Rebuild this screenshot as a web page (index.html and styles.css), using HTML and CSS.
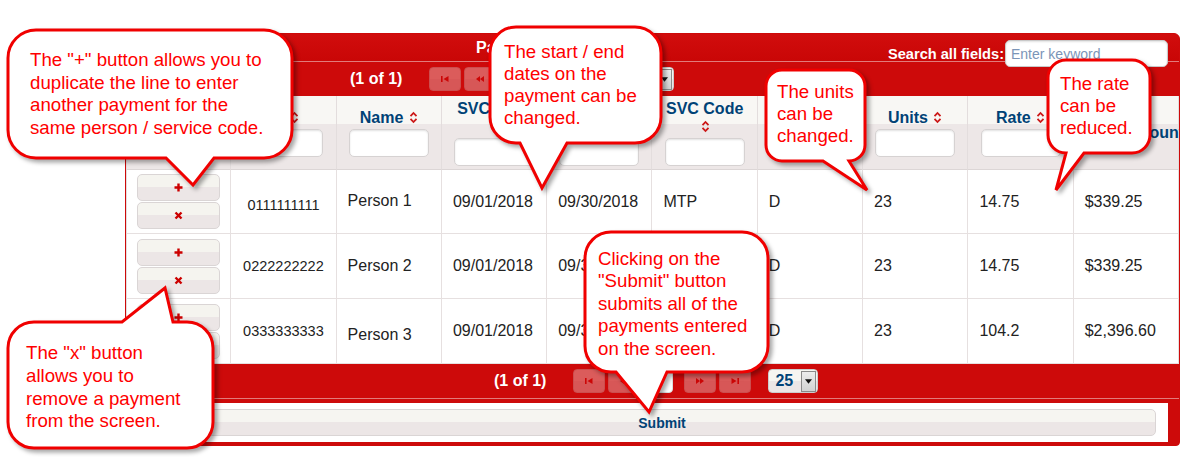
FILE: index.html
```html
<!DOCTYPE html>
<html lang="en">
<head>
<meta charset="utf-8">
<title>Payments</title>
<link rel="stylesheet" href="styles.css">
</head>
<body>
<div class="page">
  <div class="panel">
    <div class="titlebar">
      <span class="title">Payments</span>
      <div class="search">
        <label class="search-lbl" for="kw">Search all fields:</label>
        <input id="kw" class="search-in" type="text" placeholder="Enter keyword">
      </div>
    </div>

    <div class="pager pager-top">
      <span class="report">(1 of 1)</span>
      <span class="pbtn off"><svg class="picon" viewBox="0 0 10 8"><rect x="1" y="1" width="1.6" height="6"/><polygon points="8.5,1 3.5,4 8.5,7"/></svg></span>
      <span class="pbtn off"><svg class="picon" viewBox="0 0 10 8"><polygon points="5,1 1,4 5,7"/><polygon points="9,1 5,4 9,7"/></svg></span>
      <span class="pnum">1</span>
      <span class="pbtn off"><svg class="picon" viewBox="0 0 10 8"><polygon points="1,1 5,4 1,7"/><polygon points="5,1 9,4 5,7"/></svg></span>
      <span class="pbtn off"><svg class="picon" viewBox="0 0 10 8"><polygon points="1.5,1 6.5,4 1.5,7"/><rect x="7.4" y="1" width="1.6" height="6"/></svg></span>
      <span class="rpp"><span class="rpp-val">25</span><span class="rpp-trig"><svg class="tri" viewBox="0 0 8 5"><polygon points="0,0 8,0 4,5"/></svg></span></span>
    </div>

    <table class="grid">
      <colgroup>
        <col><col><col><col><col><col><col><col><col><col>
      </colgroup>
      <thead>
        <tr>
          <th></th>
          <th><div class="hc"><span class="lbl">ID <svg class="sort" viewBox="0 0 9 13"><path d="M1.5 5.2 L4.5 2 L7.5 5.2 M1.5 7.8 L4.5 11 L7.5 7.8"/></svg></span><input class="filter" type="text"></div></th>
          <th><div class="hc"><span class="lbl">Name <svg class="sort" viewBox="0 0 9 13"><path d="M1.5 5.2 L4.5 2 L7.5 5.2 M1.5 7.8 L4.5 11 L7.5 7.8"/></svg></span><input class="filter" type="text"></div></th>
          <th><div class="hc"><span class="lbl">SVC Start <svg class="sort" viewBox="0 0 9 13"><path d="M1.5 5.2 L4.5 2 L7.5 5.2 M1.5 7.8 L4.5 11 L7.5 7.8"/></svg></span><input class="filter" type="text"></div></th>
          <th><div class="hc"><span class="lbl">SVC End Date <svg class="sort" viewBox="0 0 9 13"><path d="M1.5 5.2 L4.5 2 L7.5 5.2 M1.5 7.8 L4.5 11 L7.5 7.8"/></svg></span><input class="filter" type="text"></div></th>
          <th><div class="hc"><span class="lbl">SVC Code <svg class="sort" viewBox="0 0 9 13"><path d="M1.5 5.2 L4.5 2 L7.5 5.2 M1.5 7.8 L4.5 11 L7.5 7.8"/></svg></span><input class="filter" type="text"></div></th>
          <th><div class="hc"><span class="lbl">Mod <svg class="sort" viewBox="0 0 9 13"><path d="M1.5 5.2 L4.5 2 L7.5 5.2 M1.5 7.8 L4.5 11 L7.5 7.8"/></svg></span><input class="filter" type="text"></div></th>
          <th><div class="hc"><span class="lbl">Units <svg class="sort" viewBox="0 0 9 13"><path d="M1.5 5.2 L4.5 2 L7.5 5.2 M1.5 7.8 L4.5 11 L7.5 7.8"/></svg></span><input class="filter" type="text"></div></th>
          <th><div class="hc"><span class="lbl">Rate <svg class="sort" viewBox="0 0 9 13"><path d="M1.5 5.2 L4.5 2 L7.5 5.2 M1.5 7.8 L4.5 11 L7.5 7.8"/></svg></span><input class="filter" type="text"></div></th>
          <th><div class="hc-wide"><span class="lbl-nowrap">Payment Amount <svg class="sort" viewBox="0 0 9 13"><path d="M1.5 5.2 L4.5 2 L7.5 5.2 M1.5 7.8 L4.5 11 L7.5 7.8"/></svg></span></div></th>
        </tr>
      </thead>
      <tbody>
        <tr class="r1">
          <td><div class="rowbtns"><button class="rbtn"><svg class="ricon" viewBox="0 0 9 9"><path d="M4.5 0.5 V8.5 M0.5 4.5 H8.5"/></svg></button><button class="rbtn"><svg class="ricon" viewBox="0 0 9 9"><path d="M1.5 1.5 L7.5 7.5 M7.5 1.5 L1.5 7.5"/></svg></button></div></td>
          <td class="id down">0111111111</td>
          <td class="up">Person 1</td>
          <td>09/01/2018</td>
          <td>09/30/2018</td>
          <td>MTP</td>
          <td>D</td>
          <td>23</td>
          <td>14.75</td>
          <td>$339.25</td>
        </tr>
        <tr class="r2">
          <td><div class="rowbtns"><button class="rbtn"><svg class="ricon" viewBox="0 0 9 9"><path d="M4.5 0.5 V8.5 M0.5 4.5 H8.5"/></svg></button><button class="rbtn"><svg class="ricon" viewBox="0 0 9 9"><path d="M1.5 1.5 L7.5 7.5 M7.5 1.5 L1.5 7.5"/></svg></button></div></td>
          <td class="id">0222222222</td>
          <td>Person 2</td>
          <td>09/01/2018</td>
          <td>09/30/2018</td>
          <td>MTP</td>
          <td>D</td>
          <td>23</td>
          <td>14.75</td>
          <td>$339.25</td>
        </tr>
        <tr class="r3">
          <td><div class="rowbtns"><button class="rbtn"><svg class="ricon" viewBox="0 0 9 9"><path d="M4.5 0.5 V8.5 M0.5 4.5 H8.5"/></svg></button><button class="rbtn"><svg class="ricon" viewBox="0 0 9 9"><path d="M1.5 1.5 L7.5 7.5 M7.5 1.5 L1.5 7.5"/></svg></button></div></td>
          <td class="id">0333333333</td>
          <td class="down">Person 3</td>
          <td>09/01/2018</td>
          <td>09/30/2018</td>
          <td>MTP</td>
          <td>D</td>
          <td>23</td>
          <td>104.2</td>
          <td>$2,396.60</td>
        </tr>
      </tbody>
    </table>

    <div class="pager pager-bottom">
      <span class="report">(1 of 1)</span>
      <span class="pbtn off"><svg class="picon" viewBox="0 0 10 8"><rect x="1" y="1" width="1.6" height="6"/><polygon points="8.5,1 3.5,4 8.5,7"/></svg></span>
      <span class="pbtn off"><svg class="picon" viewBox="0 0 10 8"><polygon points="5,1 1,4 5,7"/><polygon points="9,1 5,4 9,7"/></svg></span>
      <span class="pnum">1</span>
      <span class="pbtn off"><svg class="picon" viewBox="0 0 10 8"><polygon points="1,1 5,4 1,7"/><polygon points="5,1 9,4 5,7"/></svg></span>
      <span class="pbtn off"><svg class="picon" viewBox="0 0 10 8"><polygon points="1.5,1 6.5,4 1.5,7"/><rect x="7.4" y="1" width="1.6" height="6"/></svg></span>
      <span class="rpp"><span class="rpp-val">25</span><span class="rpp-trig"><svg class="tri" viewBox="0 0 8 5"><polygon points="0,0 8,0 4,5"/></svg></span></span>
    </div>

    <div class="footer">
      <div class="fbox"><button class="submit">Submit</button></div>
    </div>
  </div>

  <svg class="callouts" viewBox="0 0 1185 457" width="1185" height="457">
    <path d="M36,30 H264 A28,28 0 0 1 292,58 V130 A28,28 0 0 1 264,158 H214 L193,185 L166,158 H36 A28,28 0 0 1 8,130 V58 A28,28 0 0 1 36,30 Z"/>
    <path d="M516,27 H635 A26,26 0 0 1 661,53 V117 A26,26 0 0 1 635,143 H567 L542,188 L520,143 H516 A26,26 0 0 1 490,117 V53 A26,26 0 0 1 516,27 Z"/>
    <path d="M782,70 H849 A16,16 0 0 1 865,86 V145 A16,16 0 0 1 849,161 L867,190 L823,161 H782 A16,16 0 0 1 766,145 V86 A16,16 0 0 1 782,70 Z"/>
    <path d="M1066,60 H1132 A18,18 0 0 1 1150,78 V135 A18,18 0 0 1 1132,153 H1084 L1056,190 L1066,153 A18,18 0 0 1 1048,135 V78 A18,18 0 0 1 1066,60 Z"/>
    <path d="M611,232 H742 A26,26 0 0 1 768,258 V346 A26,26 0 0 1 742,372 H667 L649,412 L616,372 H611 A26,26 0 0 1 585,346 V258 A26,26 0 0 1 611,232 Z"/>
    <path d="M34,322 H122 L165,288 L173,322 H187 A26,26 0 0 1 213,348 V422 A26,26 0 0 1 187,448 H34 A26,26 0 0 1 8,422 V348 A26,26 0 0 1 34,322 Z"/>
  </svg>

  <div class="note n1">The "+" button allows you to<br>duplicate the line to enter<br>another payment for the<br>same person / service code.</div>
  <div class="note n2">The start / end<br>dates on the<br>payment can be<br>changed.</div>
  <div class="note n3">The units<br>can be<br>changed.</div>
  <div class="note n4">The rate<br>can be<br>reduced.</div>
  <div class="note n5">Clicking on the<br>"Submit" button<br>submits all of the<br>payments entered<br>on the screen.</div>
  <div class="note n6">The "x" button<br>allows you to<br>remove a payment<br>from the screen.</div>
</div>
</body>
</html>
```

FILE: styles.css
```css
* { box-sizing: border-box; }

html, body {
  margin: 0;
  padding: 0;
  background: #ffffff;
}

body {
  width: 1185px;
  height: 457px;
  overflow: hidden;
  font-family: "Liberation Sans", Arial, sans-serif;
}

.page {
  position: relative;
  width: 1185px;
  height: 457px;
  padding-top: 33px;
}

/* ---------- panel ---------- */
.panel {
  margin-left: 125px;
  width: 1055px;
  border: 1px solid #cd0a0a;
  border-radius: 6px 6px 4px 4px;
  background: #cd0a0a;
  overflow: hidden;
}

.titlebar {
  display: flex;
  align-items: flex-start;
  height: 28px;
  background: linear-gradient(#d10d0d, #c90606);
  border-bottom: 1px solid #e27b7b;
}

.title {
  margin-left: 350px;
  line-height: 27px;
  color: #ffffff;
  font-weight: bold;
  font-size: 16px;
}

.search {
  margin-left: auto;
  margin-right: 11px;
  margin-top: 6px;
  display: flex;
  align-items: center;
  gap: 1px;
}

.search-lbl {
  color: #ffffff;
  font-weight: bold;
  font-size: 14.6px;
}

.search-in {
  width: 163px;
  height: 27px;
  border: 1px solid #c9c9c9;
  border-radius: 5px;
  background: #ffffff;
  padding: 0 5px;
  font-family: "Liberation Sans", Arial, sans-serif;
  font-size: 14px;
  box-shadow: inset 0 1px 2px rgba(0,0,0,0.12);
}
.search-in::placeholder { color: #7b95b8; }

/* ---------- paginator ---------- */
.pager {
  display: flex;
  align-items: center;
  height: 34px;
  background: #cd0a0a;
}
.pager-top { padding-left: 224px; }
.pager-bottom {
  padding-left: 368px;
  border-bottom: 1px solid #e27b7b;
  height: 35px;
}

.report {
  color: #ffffff;
  font-weight: bold;
  font-size: 16px;
  margin-right: 27px;
}

.pbtn {
  width: 32px;
  height: 24px;
  margin-right: 3px;
  display: flex;
  align-items: center;
  justify-content: center;
  border: 1px solid #cccccc;
  border-radius: 4px;
  background: linear-gradient(#f6f5f1 0%, #f6f5f1 50%, #ece6e6 50%, #ece6e6 100%);
}
.pbtn.off { opacity: 0.35; }

.picon {
  width: 10px;
  height: 8px;
  fill: #cc0000;
}

.pnum {
  width: 30px;
  height: 24px;
  margin-right: 11px;
  display: flex;
  align-items: center;
  justify-content: center;
  background: #ffffff;
  border: 1px solid #dddddd;
  border-radius: 4px;
  color: #6a3d8c;
  font-weight: bold;
  font-size: 14px;
}

.rpp {
  margin-left: 14px;
  width: 50px;
  height: 24px;
  display: flex;
  align-items: center;
  justify-content: space-between;
  border: 1px solid #cccccc;
  border-radius: 4px;
  background: linear-gradient(#f6f5f1 0%, #f6f5f1 50%, #ece6e6 50%, #ece6e6 100%);
  padding-left: 6px;
  padding-right: 1px;
}
.rpp-val {
  color: #004276;
  font-weight: bold;
  font-size: 16px;
}
.rpp-trig {
  width: 15px;
  height: 21px;
  display: flex;
  align-items: center;
  justify-content: center;
  border: 1px solid #8a8a8a;
  background: linear-gradient(#ececec, #d2d2d2);
}
.tri {
  width: 7px;
  height: 5px;
  fill: #111111;
}

/* ---------- grid ---------- */
.grid {
  width: 100%;
  table-layout: fixed;
  border-collapse: separate;
  border-spacing: 0;
  background: #ffffff;
}

.grid th {
  height: 74px;
  padding: 0 10px;
  vertical-align: middle;
  text-align: center;
  color: #004276;
  font-weight: bold;
  font-size: 16px;
  line-height: 18px;
  background: linear-gradient(#f8f7f4 0%, #f8f7f4 39%, #ede7e7 39%, #ede7e7 100%);
  border-right: 1px solid #e3dddd;
  border-bottom: 1px solid #dcd6d6;
}
.grid th:first-child,
.grid td:first-child { border-left: 1px solid #e3dddd; }

.hc {
  display: flex;
  flex-direction: column;
  align-items: center;
}
.lbl { display: block; text-align: center; }

.hc-wide {
  display: flex;
  justify-content: center;
  white-space: nowrap;
}
.lbl-nowrap { white-space: nowrap; }

.sort {
  width: 9px;
  height: 13px;
  margin-left: 1px;
  vertical-align: -1px;
  fill: none;
  stroke: #cc1a1a;
  stroke-width: 1.8;
}

.filter {
  margin-top: 2px;
  width: 80px;
  height: 28px;
  border: 1px solid #d6d2d2;
  border-radius: 5px;
  background: #ffffff;
  box-shadow: inset 0 1px 2px rgba(0,0,0,0.12);
}

.grid td {
  padding: 0 11px;
  vertical-align: middle;
  font-size: 16px;
  color: #222222;
  border-right: 1px solid #e6e0e0;
  border-bottom: 1px solid #e6e0e0;
}
.r1 td { height: 64px; }
.r2 td { height: 65px; }
.r3 td { height: 65px; }

.grid td.id {
  text-align: center;
  font-size: 14.5px;
  padding: 0 4px;
}
.grid td.down { padding-top: 7px; }
.grid td.up { padding-bottom: 2px; }

.rowbtns {
  display: flex;
  flex-direction: column;
  align-items: center;
  gap: 1px;
}
.rbtn {
  width: 83px;
  height: 27px;
  padding: 0;
  display: flex;
  align-items: center;
  justify-content: center;
  border: 1px solid #dad5d5;
  border-radius: 5px;
  background: linear-gradient(#f5f4ef 0%, #f5f4ef 47%, #ece6e6 47%, #ece6e6 100%);
}
.ricon {
  width: 9px;
  height: 9px;
  fill: none;
  stroke: #cc0000;
  stroke-width: 2.4;
}

/* ---------- footer ---------- */
.footer {
  background: #cd0a0a;
  padding: 4px 11px 3px 30px;
}
.fbox {
  background: #ffffff;
  padding: 6px 12px;
}
.submit {
  display: block;
  width: 100%;
  height: 27px;
  border: 1px solid #dad5d5;
  border-radius: 5px;
  background: linear-gradient(#f6f5f1 0%, #f6f5f1 50%, #ece6e6 50%, #ece6e6 100%);
  color: #004276;
  font-family: "Liberation Sans", Arial, sans-serif;
  font-weight: bold;
  font-size: 14px;
}

/* ---------- callouts (overlay annotations) ---------- */
.callouts {
  position: absolute;
  left: 0;
  top: 0;
  pointer-events: none;
}
.callouts path {
  fill: #ffffff;
  stroke: #f00000;
  stroke-width: 3;
  stroke-linejoin: miter;
  filter: drop-shadow(3px 3px 2px rgba(0,0,0,0.35));
}

.note {
  position: absolute;
  color: #ff0000;
  font-family: "Liberation Sans", Arial, sans-serif;
  font-size: 14pt;
  line-height: 22px;
  white-space: nowrap;
}
.n1 { left: 30px;   top: 49px;  line-height: 22.5px; }
.n2 { left: 504px;  top: 41px;  }
.n3 { left: 777px;  top: 81px;  }
.n4 { left: 1060px; top: 73px;  }
.n5 { left: 598px;  top: 248px; line-height: 22.4px; }
.n6 { left: 26px;   top: 342px; line-height: 22.8px; }
```
